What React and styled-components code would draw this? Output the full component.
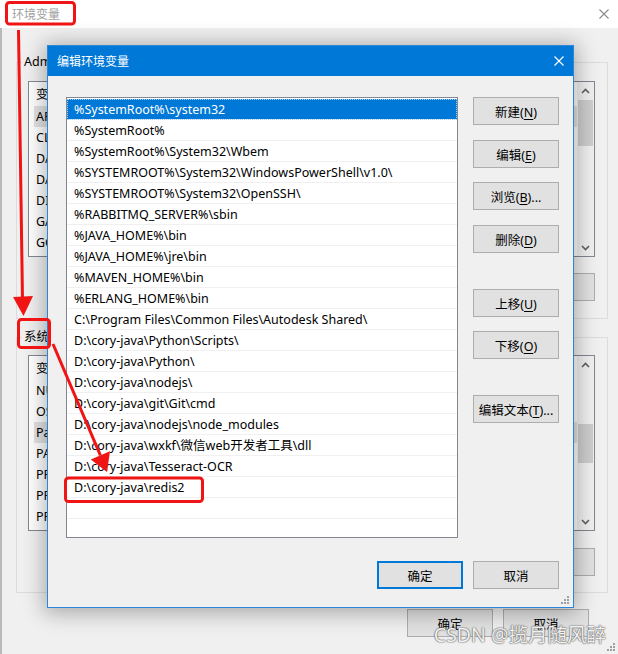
import React from "react";
import styled, { createGlobalStyle } from "styled-components";

const Global = createGlobalStyle`
  html, body { margin: 0; padding: 0; }
  body {
    width: 618px; height: 654px; overflow: hidden; background: #f0f0f0;
    font-family: "Noto Sans", "Noto Sans CJK SC", sans-serif; font-size: 12px; color: #000;
  }
`;

const Window = styled.div`
  position: relative;
  width: 618px;
  height: 654px;
  overflow: hidden;
  background: #f0f0f0;
  display: flex;
  flex-direction: column;
`;

const TitleBar = styled.div`
  height: 28px;
  flex: none;
  background: #fff;
  display: flex;
  align-items: center;
  justify-content: space-between;
  padding: 0 9px 0 12px;
  color: #a0a0a0;
  font-size: 12px;
`;

const Body = styled.div`
  flex: 1;
  border-left: 2px solid #b9b9b9;
  padding: 26px 10px 0 14px;
  display: flex;
  flex-direction: column;
`;

const Group = styled.fieldset`
  margin: ${(p) => p.$mt || 0}px 0 0;
  padding: ${(p) => p.$pt}px 12px ${(p) => p.$pb}px 11px;
  border: 1px solid #dcdcdc;
  min-width: 0;
  display: flex;
  flex-direction: column;
`;

const Legend = styled.legend`
  padding: 0 2px;
  margin-left: -6px;
  line-height: 16px;
  height: 16px;
  font-size: 12.5px;
`;

const BgList = styled.div`
  height: 176px;
  box-sizing: border-box;
  border: 1px solid #828790;
  background: #fff;
  display: flex;
  overflow: hidden;
  font-size: 12.5px;
`;

const BgListBody = styled.div`
  flex: 1;
  min-width: 0;
`;

const BgHeader = styled.div`
  height: 24px;
  line-height: 26px;
  padding-left: 7px;
`;

const BgRow = styled.div`
  height: 21px;
  line-height: 21px;
  margin-left: 5px;
  padding-left: 2px;
  white-space: nowrap;
  background: ${(p) => (p.$sel ? "#e3e3e3" : "transparent")};
`;

const VScroll = styled.div`
  width: 17px;
  flex: none;
  background: #f0f0f0;
  display: flex;
  flex-direction: column;
  align-items: center;
`;

const ScrollArrow = styled.div`
  width: 17px;
  height: 17px;
  flex: none;
  display: flex;
  align-items: center;
  justify-content: center;
`;

const Thumb = styled.div`
  width: 15px;
  margin-top: ${(p) => p.$top}px;
  height: ${(p) => p.$h}px;
  background: #cdcdcd;
`;

const Track = styled.div`
  flex: 1;
`;

const ButtonRow = styled.div`
  display: flex;
  justify-content: flex-end;
  gap: 10px;
  margin-top: ${(p) => p.$mt || 0}px;
  padding-right: ${(p) => p.$pr || 0}px;
`;

const Button = styled.button`
  width: 86px;
  height: 28px;
  box-sizing: border-box;
  flex: none;
  background: #e1e1e1;
  border: 1px solid #adadad;
  font: inherit;
  font-size: 12.5px;
  color: #000;
  padding: 0;
  margin-top: ${(p) => p.$mt || 0}px;
  border-color: ${(p) => (p.$primary ? "#0078d7" : "#adadad")};
  box-shadow: ${(p) => (p.$primary ? "inset 0 0 0 1px #0078d7" : "none")};
  u { text-decoration: underline; text-underline-offset: 2px; }
`;

const Dialog = styled.div`
  position: absolute;
  left: 47px;
  top: 45px;
  width: 527px;
  height: 563px;
  box-sizing: border-box;
  border: 1px solid #2a86d6;
  background: #f0f0f0;
  box-shadow: 0 2px 20px 3px rgba(0, 0, 0, 0.3);
  display: flex;
  flex-direction: column;
`;

const DlgTitle = styled.div`
  height: 30px;
  flex: none;
  background: #0078d7;
  color: #fff;
  display: flex;
  align-items: center;
  justify-content: space-between;
  padding: 0 9px 0 9px;
  font-size: 12px;
`;

const DlgBody = styled.div`
  display: grid;
  grid-template-columns: 392px 86px;
  grid-template-rows: 441px 28px;
  column-gap: 15px;
  row-gap: 23px;
  padding: 21px 0 0 18px;
`;

const PathList = styled.div`
  box-sizing: border-box;
  border: 1px solid #828790;
  background: #fff;
  overflow: hidden;
  padding-top: 1px;
  font-size: 12.5px;
`;

const PathRow = styled.div`
  height: 20px;
  line-height: 22px;
  overflow: hidden;
  border-bottom: 1px solid #f0f0f0;
  padding-left: 7px;
  white-space: nowrap;
  background: ${(p) => (p.$sel ? "#0078d7" : "#fff")};
  color: ${(p) => (p.$sel ? "#fff" : "#000")};
  outline: ${(p) => (p.$sel ? "1px dotted #a9cff2" : "none")};
  outline-offset: -1px;
`;

const ButtonCol = styled.div`
  display: flex;
  flex-direction: column;
`;

const DlgFooter = styled.div`
  grid-column: 1 / -1;
  display: flex;
  justify-content: flex-end;
  gap: 10px;
`;

const Grip = styled.svg`
  position: absolute;
  right: ${(p) => p.$r}px;
  bottom: ${(p) => p.$b}px;
`;

const Watermark = styled.div`
  position: absolute;
  right: 12px;
  bottom: 7px;
  font-size: 19.5px;
  line-height: 24px;
  color: rgba(255, 255, 255, 0.92);
  text-shadow: 0 0 1px #666, 0 0 1px #666, 0 0 2px #888;
`;

const Annot = styled.svg`
  position: absolute;
  left: 0;
  top: 0;
  pointer-events: none;
`;

const Chevron = ({ up }) => (
  <svg width="9" height="6" viewBox="0 0 9 6">
    <path
      d={up ? "M1 5 L4.5 1.5 L8 5" : "M1 1 L4.5 4.5 L8 1"}
      fill="none"
      stroke="#606060"
      strokeWidth="1.6"
    />
  </svg>
);

const CloseX = ({ color, size = 10, w = 1 }) => (
  <svg width={size} height={size} viewBox="0 0 10 10">
    <path d="M0.5 0.5 L9.5 9.5 M9.5 0.5 L0.5 9.5" stroke={color} strokeWidth={w} />
  </svg>
);

const GripDots = ({ r, b }) => (
  <Grip $r={r} $b={b} width="9" height="9" viewBox="0 0 9 9">
    {[
      [6, 0],
      [3, 3],
      [6, 3],
      [0, 6],
      [3, 6],
      [6, 6],
    ].map(([x, y], i) => (
      <rect key={i} x={x} y={y} width="2" height="2" fill="#a0a0a0" />
    ))}
  </Grip>
);

const Mn = ({ label, k, tail = "" }) => (
  <>
    {label}(<u>{k}</u>){tail}
  </>
);

const paths = [
  "%SystemRoot%\\system32",
  "%SystemRoot%",
  "%SystemRoot%\\System32\\Wbem",
  "%SYSTEMROOT%\\System32\\WindowsPowerShell\\v1.0\\",
  "%SYSTEMROOT%\\System32\\OpenSSH\\",
  "%RABBITMQ_SERVER%\\sbin",
  "%JAVA_HOME%\\bin",
  "%JAVA_HOME%\\jre\\bin",
  "%MAVEN_HOME%\\bin",
  "%ERLANG_HOME%\\bin",
  "C:\\Program Files\\Common Files\\Autodesk Shared\\",
  "D:\\cory-java\\Python\\Scripts\\",
  "D:\\cory-java\\Python\\",
  "D:\\cory-java\\nodejs\\",
  "D:\\cory-java\\git\\Git\\cmd",
  "D:\\cory-java\\nodejs\\node_modules",
  "D:\\cory-java\\wxkf\\微信web开发者工具\\dll",
  "D:\\cory-java\\Tesseract-OCR",
  "D:\\cory-java\\redis2",
  "",
  "",
];

const userVars = ["APPDATA", "CLASSPATH", "DATA_HOME", "DART_HOME", "DIR_PATH", "GATEWAY", "GOPATH"];
const sysVars = [
  "NUMBER_OF_PROCESSORS",
  "OS",
  "Path",
  "PATHEXT",
  "PROCESSOR_ARCHITECTURE",
  "PROCESSOR_IDENTIFIER",
  "PROCESSOR_LEVEL",
];

const VarList = ({ rows, selIndex, thumbTop, thumbH }) => (
  <BgList>
    <BgListBody>
      <BgHeader>变量</BgHeader>
      {rows.map((r, i) => (
        <BgRow key={i} $sel={i === selIndex}>
          {r}
        </BgRow>
      ))}
    </BgListBody>
    <VScroll>
      <ScrollArrow>
        <Chevron up />
      </ScrollArrow>
      <Thumb $top={thumbTop} $h={thumbH} />
      <Track />
      <ScrollArrow>
        <Chevron />
      </ScrollArrow>
    </VScroll>
  </BgList>
);

export default function App() {
  return (
    <>
      <Global />
      <Window>
        <TitleBar>
          <span>环境变量</span>
          <CloseX color="#8a8a8a" size={10} w={1.1} />
        </TitleBar>
        <Body>
          <Group $pt={11} $pb={17}>
            <Legend>Administrator 的用户变量(U)</Legend>
            <VarList rows={userVars} selIndex={0} thumbTop={1} thumbH={46} />
            <ButtonRow $mt={16}>
              <Button>
                <Mn label="新建" k="N" tail="..." />
              </Button>
              <Button>
                <Mn label="编辑" k="E" tail="..." />
              </Button>
              <Button>
                <Mn label="删除" k="D" />
              </Button>
            </ButtonRow>
          </Group>
          <Group $mt={10} $pt={10} $pb={16}>
            <Legend>系统变量(S)</Legend>
            <VarList rows={sysVars} selIndex={2} thumbTop={51} thumbH={39} />
            <ButtonRow $mt={17}>
              <Button>
                <Mn label="新建" k="W" tail="..." />
              </Button>
              <Button>
                <Mn label="编辑" k="I" tail="..." />
              </Button>
              <Button>
                <Mn label="删除" k="L" />
              </Button>
            </ButtonRow>
          </Group>
          <ButtonRow $mt={16} $pr={19}>
            <Button>确定</Button>
            <Button>取消</Button>
          </ButtonRow>
        </Body>
        <GripDots r={2} b={2} />

        <Dialog>
          <DlgTitle>
            <span>编辑环境变量</span>
            <CloseX color="#fff" size={10} w={1.2} />
          </DlgTitle>
          <DlgBody>
            <PathList>
              {paths.map((p, i) => (
                <PathRow key={i} $sel={i === 0}>
                  {p}
                </PathRow>
              ))}
            </PathList>
            <ButtonCol>
              <Button>
                <Mn label="新建" k="N" />
              </Button>
              <Button $mt={15}>
                <Mn label="编辑" k="E" />
              </Button>
              <Button $mt={14}>
                <Mn label="浏览" k="B" tail="..." />
              </Button>
              <Button $mt={15}>
                <Mn label="删除" k="D" />
              </Button>
              <Button $mt={36}>
                <Mn label="上移" k="U" />
              </Button>
              <Button $mt={14}>
                <Mn label="下移" k="O" />
              </Button>
              <Button $mt={36}>
                <Mn label="编辑文本" k="T" tail="..." />
              </Button>
            </ButtonCol>
            <DlgFooter>
              <Button $primary>确定</Button>
              <Button>取消</Button>
            </DlgFooter>
          </DlgBody>
          <GripDots r={3} b={2} />
        </Dialog>

        <Annot width="618" height="654" viewBox="0 0 618 654">
          <g fill="none" stroke="#f01414" strokeWidth="3">
            <rect x="6.5" y="2.5" width="68" height="21.5" rx="3" />
            <rect x="18.5" y="319.5" width="31" height="28" rx="3" />
            <rect x="65.5" y="478" width="137" height="23.5" rx="3" />
            <line x1="18.5" y1="30" x2="22.5" y2="300" />
            <line x1="53" y1="344" x2="100.4" y2="455.3" />
          </g>
          <g fill="#f01414">
            <polygon points="13,297 33,296 23.5,316" />
            <polygon points="90.8,459.5 110,451.2 107,472" />
          </g>
        </Annot>

        <Watermark>CSDN @揽月随风醉</Watermark>
      </Window>
    </>
  );
}
